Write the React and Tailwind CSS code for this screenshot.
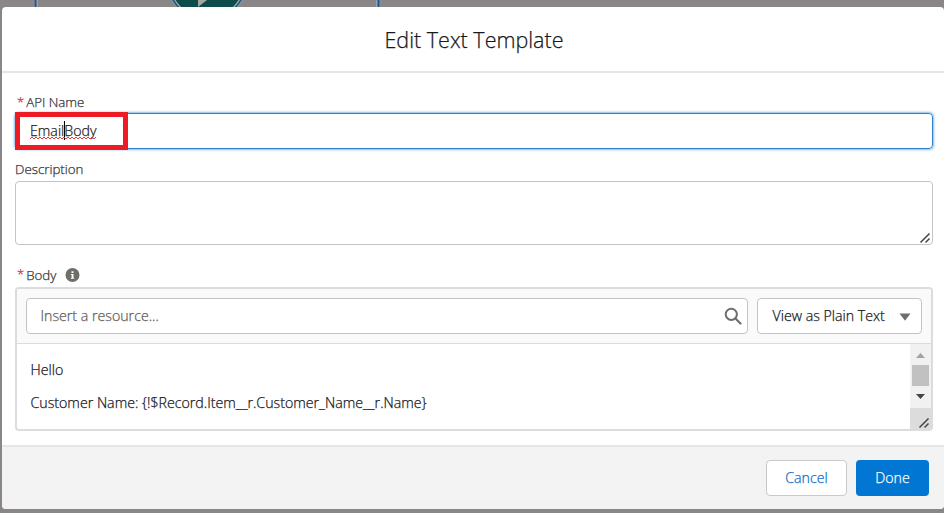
function ResizeGrip({ className }) {
  return (
    <svg className={className} width="12" height="12" viewBox="0 0 12 12" fill="none" stroke="#444" strokeWidth="1.5">
      <path d="M1.500 10.500 10.500 1.500M6.500 10.500 10.500 6.500" />
    </svg>
  );
}

function Required() {
  return <span className="mr-[2px] ml-[2px] text-[13px] text-[#c23934]">*</span>;
}

export default function App() {
  return (
    <div className="relative h-[513px] w-[944px] overflow-hidden bg-[#8a8687] pt-[7px] pl-[2px] font-['Open_Sans','Noto_Sans',sans-serif] text-[14.2px] font-light text-[#16181c] [-webkit-text-stroke:0.25px_currentColor]">
      <svg className="absolute top-0 left-0" width="400" height="8" viewBox="0 0 400 8">
        <path d="M35.5 0V8M379 0V8" stroke="#7292ae" strokeWidth="5" opacity=".6" />
        <path d="M35.5 0V8M378.5 0V8" stroke="#28527c" strokeWidth="1.6" />
        <path d="M37.5 0V8M376.5 0V8" stroke="#8ca5b8" />
        <circle cx="207" cy="-20" r="42" fill="#7896b0" opacity=".5" />
        <circle cx="207" cy="-20" r="40" fill="#1f5478" />
        <circle cx="207" cy="-20" r="38.5" fill="#a6b0b2" />
        <circle cx="207" cy="-20" r="37.3" fill="#0d4c4a" />
        <path d="M198 0h9l-9 7z" fill="#a5a5a5" />
      </svg>
      <div className="relative flex h-[502px] w-[942px] flex-col overflow-hidden rounded-[4px] bg-white">
        <header className="flex h-[66px] shrink-0 items-center justify-center border-b-2 border-[#e5e5e5]">
          <h1 className="pt-[2px] pl-[2px] text-[21.5px] leading-[30px] font-light">Edit Text Template</h1>
        </header>

        <main className="flex h-[372px] shrink-0 flex-col pr-[11px] pl-[13px]">
          <label className="mt-[20px] flex h-[20px] items-center text-[13.3px] text-[#333]">
            <Required />
            <span>API Name</span>
          </label>
          <div className="relative flex h-[36px] items-center rounded-[4px] border border-[#2f83cc] pl-[14px] shadow-[0_0_3px_#0176d3]">
            <div className="absolute top-[-2px] left-[-1px] h-[38px] w-[113px] border-[5px] border-[#ed1c24]" />
            <span className="relative pb-[1px] text-[#222]">
              <span>EmailBody</span>
              <span className="absolute top-[1px] left-[34px] h-[19px] w-px bg-black" />
              <svg className="absolute top-[16px] left-0" width="68" height="4" viewBox="0 0 68 4" fill="none">
                <path
                  d="M0 3l2-2 2 2 2-2 2 2 2-2 2 2 2-2 2 2 2-2 2 2 2-2 2 2 2-2 2 2 2-2 2 2 2-2 2 2 2-2 2 2 2-2 2 2 2-2 2 2 2-2 2 2 2-2 2 2 2-2 2 2 2-2 2 2 2-2"
                  stroke="#ee3b3b"
                />
              </svg>
            </span>
          </div>

          <label className="mt-[10px] flex h-[20px] items-center pt-[1px] text-[13.3px] text-[#333]">
            <span>Description</span>
          </label>
          <div className="relative mt-[2px] h-[64px] rounded-[4px] border border-[#c4c4c4]">
            <ResizeGrip className="absolute right-[1px] bottom-0" />
          </div>

          <label className="mt-[20px] flex h-[20px] items-center text-[13.3px] text-[#333]">
            <Required />
            <span className="pt-[1px]">Body</span>
            <svg className="ml-[9px]" width="15" height="15" viewBox="0 0 15 15">
              <circle cx="7.5" cy="7" r="7" fill="#706e6b" />
              <path d="M6.5 3.2h2v1.9h-2zM6 6h2.5v3.8h.7v1H5.9v-1h.7V7H6z" fill="#fff" />
            </svg>
          </label>
          <section className="mt-[2px] flex h-[144px] flex-col overflow-hidden rounded-[4px] border-2 border-[#dcdcdc]">
            <div className="flex h-[55px] shrink-0 items-center gap-[9px] border-b border-[#dcdcdc] bg-[#fafafa] px-[9px]">
              <div className="flex h-[36px] w-[722px] items-center justify-between rounded-[4px] border border-[#c4c4c4] bg-white pr-[5px] pl-[13.5px] text-[#5e5c5a]">
                <span>Insert a resource...</span>
                <svg width="18" height="18" viewBox="0 0 18 18" fill="none" stroke="#706e6b">
                  <circle cx="7.3" cy="7.3" r="5.6" strokeWidth="2" />
                  <path d="m11.5 11.5 5 5" strokeWidth="2.2" strokeLinecap="round" />
                </svg>
              </div>
              <div className="flex h-[36px] w-[165px] items-center justify-between rounded-[4px] border border-[#c4c4c4] bg-white pr-[10px] pl-[14.5px]">
                <span>View as Plain Text</span>
                <svg className="relative top-[1px]" width="12" height="8" viewBox="0 0 12 8">
                  <path d="M.5.5h11L6 7.8z" fill="#706e6b" />
                </svg>
              </div>
            </div>
            <div className="flex flex-1">
              <div className="flex flex-1 flex-col pt-[15px] pl-[13.5px]">
                <p className="h-[33px] leading-[22px]">Hello</p>
                <p className="leading-[22px] whitespace-nowrap">{'Customer Name: {!$Record.Item__r.Customer_Name__r.Name}'}</p>
              </div>
              <div className="flex w-[21px] flex-col bg-[#f1f1f1]">
                <svg width="21" height="21" viewBox="0 0 21 21">
                  <path d="M6 14h9L10.500 9z" fill="#a3a3a3" />
                </svg>
                <div className="mx-[2px] h-[21px] bg-[#c1c1c1]" />
                <svg width="21" height="22" viewBox="0 0 21 22">
                  <path d="M6 8h9l-4.500 5z" fill="#444" />
                </svg>
                <div className="flex flex-1 items-end justify-end bg-[#dcdcdc] pr-[1px]">
                  <ResizeGrip className="block" />
                </div>
              </div>
            </div>
          </section>
        </main>

        <footer className="flex h-[64px] shrink-0 items-center justify-end gap-[9px] border-t-2 border-[#e5e5e5] bg-[#f3f3f3] pr-[15px]">
          <button className="h-[36px] w-[81px] rounded-[4px] border border-[#c9c9c9] bg-white text-[#0b6cc9]">Cancel</button>
          <button className="h-[36px] w-[73px] rounded-[4px] bg-[#0176d3] text-white">Done</button>
        </footer>
      </div>
    </div>
  );
}
